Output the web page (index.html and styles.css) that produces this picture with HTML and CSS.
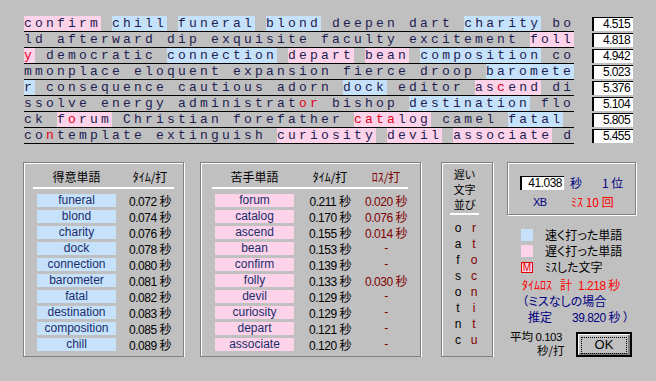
FILE: index.html
```html
<!doctype html>
<html lang="ja">
  <head>
    <meta charset="utf-8" />
    <title>タイピング結果</title>
    <link rel="stylesheet" href="styles.css">
  </head>
  <body>
    <div class="passage">
      <div class="row"><div class="line"><span class="slow">confirm</span> <span class="fast">chill</span> <span class="fast">funeral</span> <span class="fast">blond</span> deepen dart <span class="fast">charity</span> bo</div><div class="speed">4.515</div></div>
      <div class="row"><div class="line">ld afterward dip exquisite faculty excitement <span class="slow">foll</span></div><div class="speed">4.818</div></div>
      <div class="row"><div class="line"><span class="slow miss">y</span> democratic <span class="fast">connection</span> <span class="slow">depart</span> <span class="slow">bean</span> <span class="fast">composition</span> co</div><div class="speed">4.942</div></div>
      <div class="row"><div class="line">mmonplace eloquent expansion fierce droop <span class="fast">baromete</span></div><div class="speed">5.023</div></div>
      <div class="row"><div class="line"><span class="fast">r</span> consequence cautious adorn <span class="fast">dock</span> editor <span class="slow">as<span class="miss">c</span>end</span> di</div><div class="speed">5.376</div></div>
      <div class="row"><div class="line">ssolve energy administrat<span class="miss">or</span> bishop <span class="fast">destination</span> flo</div><div class="speed">5.104</div></div>
      <div class="row"><div class="line">ck <span class="slow">f<span class="miss">o</span>rum</span> Christian forefather <span class="slow"><span class="miss">cata</span>log</span> camel <span class="fast">fatal</span> </div><div class="speed">5.805</div></div>
      <div class="row"><div class="line">co<span class="miss">n</span>template extinguish <span class="slow">curiosity</span> <span class="slow">devil</span> <span class="slow">associate</span> d</div><div class="speed">5.455</div></div>
    </div>

    <div class="results">
      <section class="group best">
        <div class="head"><span class="word jp">得意単語</span><span class="time jp">ﾀｲﾑ/打</span></div>
        <div class="rule"></div>
        <div class="entry"><span class="word">funeral</span><span class="time">0.072 <i>秒</i></span></div>
        <div class="entry"><span class="word">blond</span><span class="time">0.074 <i>秒</i></span></div>
        <div class="entry"><span class="word">charity</span><span class="time">0.076 <i>秒</i></span></div>
        <div class="entry"><span class="word">dock</span><span class="time">0.078 <i>秒</i></span></div>
        <div class="entry"><span class="word">connection</span><span class="time">0.080 <i>秒</i></span></div>
        <div class="entry"><span class="word">barometer</span><span class="time">0.081 <i>秒</i></span></div>
        <div class="entry"><span class="word">fatal</span><span class="time">0.082 <i>秒</i></span></div>
        <div class="entry"><span class="word">destination</span><span class="time">0.083 <i>秒</i></span></div>
        <div class="entry"><span class="word">composition</span><span class="time">0.085 <i>秒</i></span></div>
        <div class="entry"><span class="word">chill</span><span class="time">0.089 <i>秒</i></span></div>
      </section>

      <section class="group worst">
        <div class="head"><span class="word jp">苦手単語</span><span class="time jp">ﾀｲﾑ/打</span><span class="loss jp">ﾛｽ/打</span></div>
        <div class="rule"></div>
        <div class="entry"><span class="word">forum</span><span class="time">0.211 <i>秒</i></span><span class="loss">0.020 <i>秒</i></span></div>
        <div class="entry"><span class="word">catalog</span><span class="time">0.170 <i>秒</i></span><span class="loss">0.076 <i>秒</i></span></div>
        <div class="entry"><span class="word">ascend</span><span class="time">0.155 <i>秒</i></span><span class="loss">0.014 <i>秒</i></span></div>
        <div class="entry"><span class="word">bean</span><span class="time">0.153 <i>秒</i></span><span class="loss">-</span></div>
        <div class="entry"><span class="word">confirm</span><span class="time">0.139 <i>秒</i></span><span class="loss">-</span></div>
        <div class="entry"><span class="word">folly</span><span class="time">0.133 <i>秒</i></span><span class="loss">0.030 <i>秒</i></span></div>
        <div class="entry"><span class="word">devil</span><span class="time">0.129 <i>秒</i></span><span class="loss">-</span></div>
        <div class="entry"><span class="word">curiosity</span><span class="time">0.129 <i>秒</i></span><span class="loss">-</span></div>
        <div class="entry"><span class="word">depart</span><span class="time">0.121 <i>秒</i></span><span class="loss">-</span></div>
        <div class="entry"><span class="word">associate</span><span class="time">0.120 <i>秒</i></span><span class="loss">-</span></div>
      </section>

      <section class="group keys">
        <div class="head jp"><div>遅い</div><div>文字</div><div>並び</div></div>
        <div class="rule"></div>
        <div class="pair"><span>o</span><span class="typed">r</span></div>
        <div class="pair"><span>a</span><span class="typed">t</span></div>
        <div class="pair"><span>f</span><span class="typed">o</span></div>
        <div class="pair"><span>s</span><span class="typed">c</span></div>
        <div class="pair"><span>o</span><span class="typed">n</span></div>
        <div class="pair"><span>t</span><span class="typed">i</span></div>
        <div class="pair"><span>n</span><span class="typed">t</span></div>
        <div class="pair"><span>c</span><span class="typed">u</span></div>
      </section>

      <div class="summary">
        <div class="group score">
          <div class="score-row">
            <span class="total">41.038</span>
            <span class="unit jp">秒</span>
            <span class="rank jp">1 位</span>
          </div>
          <div class="score-row">
            <span class="grade">XB</span>
            <span class="misses jp">ﾐｽ 10 回</span>
          </div>
        </div>

        <div class="legends">
          <div class="legend"><span class="swatch fast"></span><span class="jp">速く打った単語</span></div>
          <div class="legend"><span class="swatch slow"></span><span class="jp">遅く打った単語</span></div>
          <div class="legend"><span class="swatch mark">M</span><span class="jp">ﾐｽした文字</span></div>
        </div>

        <div class="notes">
          <div class="note red jp">ﾀｲﾑﾛｽ<span class="gap">計</span><span class="num">1.218</span> 秒</div>
          <div class="note navy jp">（ミスなしの場合</div>
          <div class="note navy jp"><span class="guess">推定</span><span class="num">39.820</span> 秒 ）</div>
        </div>

        <div class="footer">
          <div class="avg jp"><div>平均 <span class="num">0.103</span></div><div class="per">秒/打</div></div>
          <button type="button" class="ok"><span>OK</span></button>
        </div>
      </div>
    </div>
  </body>
</html>
```

FILE: styles.css
```css
html {
  background: #c0c0c0;
}

body {
  margin: 0;
  font: 12px/16px "Liberation Sans", "Noto Sans CJK JP", sans-serif;
  color: #000;
}

.jp {
  font-family: "Noto Sans CJK JP", sans-serif;
  font-feature-settings: "palt";
}

i {
  font-style: normal;
  font-family: "Noto Sans CJK JP", sans-serif;
}

/* typed passage */

.passage {
  padding: 16px 0 0 24px;
}

.row {
  display: flex;
  height: 16px;
}

.line {
  width: 550px;
  height: 15px;
  border-bottom: 1px solid #000;
  font: 13px/15px "Liberation Mono", monospace;
  letter-spacing: 3.2px;
  color: #1c2050;
  white-space: pre;
  overflow: hidden;
}

.fast {
  background: #c6e2fb;
}

.slow {
  background: #fdd3ea;
}

.miss {
  color: #e0001a;
}

.speed {
  box-sizing: border-box;
  width: 41px;
  height: 14px;
  margin: 1px 0 0 18px;
  padding-right: 3px;
  background: #fff;
  border-top: 1px solid #000;
  border-left: 2px solid #000;
  text-align: right;
  font-size: 12px;
  line-height: 13px;
  letter-spacing: -0.6px;
}

/* result panels */

.results {
  display: flex;
  align-items: flex-start;
  padding: 18px 0 0 23px;
}

.group {
  box-sizing: border-box;
  height: 195px;
  border: 1px solid #808080;
  box-shadow: inset 1px 1px #fff, 1px 1px #fff;
}

.head {
  display: flex;
  height: 20px;
  margin-top: 4px;
  line-height: 20px;
}

.rule {
  height: 2px;
  background: #fff;
}

.entry {
  display: flex;
  height: 16px;
}

.rule + .entry {
  margin-top: 5px;
}

.word {
  width: 79px;
  height: 13px;
  line-height: 13px;
  text-align: center;
}

.entry .word {
  color: #1a2c6a;
}

.best .entry .word {
  background: #c6e2fb;
}

.worst .entry .word {
  background: #fdd3ea;
}

.time, .loss {
  text-align: center;
  line-height: 13px;
  letter-spacing: -0.5px;
}

.head .time, .head .loss, .head .word {
  line-height: 20px;
  height: 20px;
  letter-spacing: 0;
}

.loss {
  color: #800000;
}

.best {
  width: 161px;
  padding-left: 9px;
}

.best .rule {
  width: 141px;
}

.best .word {
  margin-left: 4px;
}

.best .time {
  width: 44px;
  margin-left: 12px;
}

.worst {
  width: 221px;
  margin-left: 16px;
  padding-left: 11px;
}

.worst .rule {
  width: 196px;
}

.worst .word {
  margin-left: 3px;
}

.worst .time {
  width: 52px;
  margin-left: 10px;
}

.worst .loss {
  width: 48px;
  margin-left: 6px;
}

.keys {
  width: 52px;
  margin-left: 20px;
  padding-left: 8px;
}

.keys .head {
  display: block;
  height: auto;
  width: 29px;
  margin-top: 4px;
  font-size: 11px;
  line-height: 15px;
  text-align: center;
}

.keys .rule {
  width: 29px;
  margin-top: 1px;
}

.pair {
  display: flex;
  height: 16px;
  line-height: 16px;
}

.rule + .pair {
  margin-top: 5px;
}

.pair span {
  width: 16px;
  text-align: center;
}

.pair .typed {
  color: #800000;
}

/* summary column */

.summary {
  width: 129px;
  margin-left: 14px;
}

.score {
  height: 53px;
  padding: 12px 0 0 12px;
}

.score-row {
  display: flex;
  align-items: center;
  height: 16px;
}

.score-row + .score-row {
  margin-top: 3px;
}

.total {
  box-sizing: border-box;
  width: 44px;
  height: 14px;
  padding-right: 2px;
  background: #fff;
  border-top: 1px solid #000;
  border-left: 2px solid #000;
  text-align: right;
  line-height: 13px;
  letter-spacing: -0.5px;
}

.unit {
  margin-left: 6px;
  color: #000080;
}

.rank {
  margin-left: 20px;
  color: #000080;
}

.grade {
  width: 38px;
  margin-left: 13px;
  color: #000080;
  font-size: 11px;
  letter-spacing: -0.5px;
}

.misses {
  color: #ff0000;
}

.legends {
  margin-top: 12px;
}

.legend {
  display: flex;
  align-items: center;
  height: 16px;
  padding-left: 14px;
}

.swatch {
  width: 12px;
  height: 12px;
  margin-right: 12px;
}

.mark {
  box-sizing: border-box;
  height: 11px;
  border: 1px solid #e00000;
  background: #fdd3ea;
  color: #e00000;
  font-size: 10px;
  line-height: 9px;
  text-align: center;
}

.notes {
  margin-top: 2px;
}

.note {
  height: 16px;
  line-height: 16px;
  padding-left: 15px;
  white-space: pre;
}

.red {
  color: #ff0000;
}

.navy {
  color: #000080;
}

.num {
  font-family: "Liberation Sans", sans-serif;
  letter-spacing: -0.5px;
}

.gap {
  margin: 0 6px 0 8px;
}

.guess {
  margin: 0 20px 0 6px;
}

.footer {
  display: flex;
  margin-top: 5px;
}

.avg {
  width: 60px;
  padding-left: 3px;
  font-size: 11.5px;
  line-height: 13px;
}

.per {
  padding-left: 27px;
}

.ok {
  box-sizing: border-box;
  width: 56px;
  height: 25px;
  margin: 2px 0 0 6px;
  padding: 3px;
  background: #c0c0c0;
  border: 2px solid #000;
  box-shadow: inset 1px 1px #fff, inset -2px -2px #808080;
  font: 13px "Liberation Sans", sans-serif;
}

.ok span {
  display: block;
  height: 100%;
  line-height: 14px;
  border: 1px dotted #000;
}
```
